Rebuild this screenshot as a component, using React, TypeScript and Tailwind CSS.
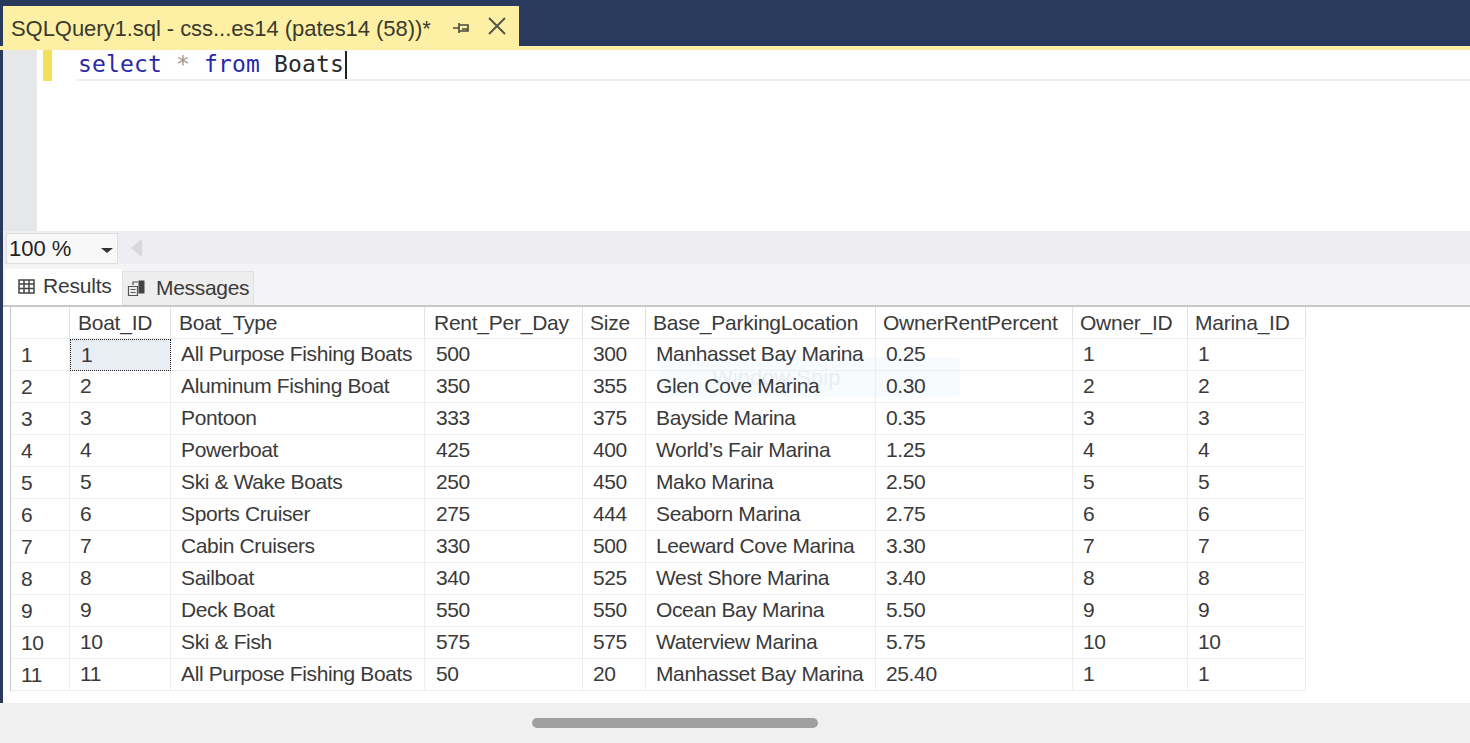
const columns = [
  "Boat_ID",
  "Boat_Type",
  "Rent_Per_Day",
  "Size",
  "Base_ParkingLocation",
  "OwnerRentPercent",
  "Owner_ID",
  "Marina_ID",
];

const rows = [
  ["1", "All Purpose Fishing Boats", "500", "300", "Manhasset Bay Marina", "0.25", "1", "1"],
  ["2", "Aluminum Fishing Boat", "350", "355", "Glen Cove Marina", "0.30", "2", "2"],
  ["3", "Pontoon", "333", "375", "Bayside Marina", "0.35", "3", "3"],
  ["4", "Powerboat", "425", "400", "World’s Fair Marina", "1.25", "4", "4"],
  ["5", "Ski & Wake Boats", "250", "450", "Mako Marina", "2.50", "5", "5"],
  ["6", "Sports Cruiser", "275", "444", "Seaborn Marina", "2.75", "6", "6"],
  ["7", "Cabin Cruisers", "330", "500", "Leeward Cove Marina", "3.30", "7", "7"],
  ["8", "Sailboat", "340", "525", "West Shore Marina", "3.40", "8", "8"],
  ["9", "Deck Boat", "550", "550", "Ocean Bay Marina", "5.50", "9", "9"],
  ["10", "Ski & Fish", "575", "575", "Waterview Marina", "5.75", "10", "10"],
  ["11", "All Purpose Fishing Boats", "50", "20", "Manhasset Bay Marina", "25.40", "1", "1"],
];

const rowClass =
  "grid grid-cols-[59px_101px_254px_158px_63px_230px_197px_115px_118px] h-8 border-b border-[#eeeeee]";

function PinIcon() {
  return (
    <svg width="18" height="16" viewBox="0 0 18 16" className="text-[#4a4a3a]">
      <path d="M1 8h6M7 3v10M7 5h9v6H7M10 9h6" fill="none" stroke="currentColor" strokeWidth="1.600" />
    </svg>
  );
}

function GridIcon() {
  return (
    <svg width="17" height="15" viewBox="0 0 17 15" className="text-[#444444]">
      <path d="M1 1h15v13H1zM1 5h15M1 9.500h15M6 1v13M11 1v13" fill="none" stroke="currentColor" strokeWidth="1.500" />
    </svg>
  );
}

function MessagesIcon() {
  return (
    <svg width="20" height="18" viewBox="0 0 20 18" className="text-[#555555]">
      <path d="M1.500 7.500h9v9h-9zM3.500 10.500h5M3.500 13.500h5" fill="none" stroke="currentColor" strokeWidth="1.200" />
      <path d="M11.500 1.500h6v13h-6z" fill="#444444" />
      <path d="M6 6V3h5" fill="none" stroke="currentColor" strokeWidth="1.200" />
    </svg>
  );
}

function ResultsGrid() {
  return (
    <div className="relative z-10 ml-[7px] w-[1296px] border-l border-[#c8c8c8] text-[21px] text-[#3a3a3a]">
      <div className={`${rowClass} leading-8 tracking-[-0.25px]`}>
        <div className="border-r border-[#e4e4e4]" />
        {columns.map((name, j) => (
          <div
            key={name}
            className={
              j < 2
                ? "border-r border-[#e4e4e4] pl-2 whitespace-nowrap"
                : j === 2
                  ? "border-r border-[#e4e4e4] pl-[9px] whitespace-nowrap"
                  : "border-r border-[#e4e4e4] pl-[7px] whitespace-nowrap"
            }
          >
            {name}
          </div>
        ))}
      </div>
      {rows.map((row, i) => (
        <div key={row[0]} className={`${rowClass} leading-[30px] tracking-[-0.37px]`}>
          <div className="border-r border-[#eeeeee] pl-[10px] pt-px">{i + 1}</div>
          {row.map((value, j) => {
            if (i === 0 && j === 0) {
              return (
                <div key={j} className="-mb-px border border-dotted border-[#222222] bg-[#e8eef4] pl-[10px]">
                  {value}
                </div>
              );
            }
            return (
              <div
                key={j}
                className={
                  j === 2
                    ? "border-r border-[#eeeeee] pl-[11px] whitespace-nowrap"
                    : "border-r border-[#eeeeee] pl-[10px] whitespace-nowrap"
                }
              >
                {value}
              </div>
            );
          })}
        </div>
      ))}
    </div>
  );
}

export default function App() {
  return (
    <div className="flex h-[743px] w-[1470px] flex-col overflow-hidden bg-white font-['Liberation_Sans',sans-serif]">
      <div className="flex h-[46px] shrink-0 items-end bg-[#2a3a5c] pl-[3px]">
        <div className="flex h-10 w-[516px] items-center bg-[#fdf0a4] pl-2 pt-1 text-[22px] tracking-[-0.05px] text-[#3a3a30]">
          <span className="whitespace-nowrap">SQLQuery1.sql - css...es14 (pates14 (58))*</span>
          <span className="ml-[21px]">
            <PinIcon />
          </span>
          <svg width="20" height="20" viewBox="0 0 20 20" className="-mt-1 ml-[17px] text-[#55554a]">
            <path d="M2 2l16 16M18 2L2 18" fill="none" stroke="currentColor" strokeWidth="2" />
          </svg>
        </div>
      </div>
      <div className="h-1 shrink-0 bg-[#fdf0a4]" />

      <div className="flex flex-1 border-l-[3px] border-[#2a3a5c]">
        <div className="flex min-w-0 flex-1 flex-col">
          <div className="flex h-[181px] shrink-0">
            <div className="w-[34px] shrink-0 bg-[#e6e7e9]" />
            <div className="ml-[6px] h-[31px] w-[9px] shrink-0 bg-[#f5e05a]" />
            <div className="ml-6 flex h-[31px] flex-1 items-center border-b-2 border-[#eceef2] pl-[2px] font-['DejaVu_Sans_Mono',monospace] text-[23px] tracking-[0.15px]">
              <span className="text-[#2a2aa8]">select</span>
              <span className="text-[#9a9a9a]">&nbsp;*&nbsp;</span>
              <span className="text-[#2a2aa8]">from</span>
              <span className="text-[#2a2a2a]">&nbsp;Boats</span>
              <span className="ml-px h-7 w-0.5 bg-[#222222]" />
            </div>
          </div>

          <div className="flex h-[33px] shrink-0 items-end bg-[#eeeef2] pl-[3px]">
            <div className="flex h-[31px] w-[112px] items-center justify-between border border-[#dddddd] bg-[#f8f8f8] pl-[2px] pr-[3px] text-[22px] text-[#222222]">
              <span>100 %</span>
              <span className="mr-px mt-1 h-0 w-0 border-x-[6px] border-t-[5px] border-x-transparent border-t-[#333333]" />
            </div>
            <span className="mb-[7px] ml-[13px] h-0 w-0 border-y-[9px] border-r-[11px] border-y-transparent border-r-[#d8d8dc]" />
          </div>

          <div className="flex h-[43px] shrink-0 items-end border-b-2 border-[#c8c8c8] bg-[#f4f4f6] pl-[2px]">
            <div className="flex h-[36px] w-[117px] items-center gap-2 bg-[#ffffff] pb-[2px] pl-[13px] text-[21px] tracking-[-0.2px] text-[#3a3a3a]">
              <GridIcon />
              Results
            </div>
            <div className="flex h-[34px] w-[132px] items-center gap-[9px] border border-b-0 border-[#e2e2e2] bg-[#eeeeee] pb-[2px] pl-1 text-[21px] tracking-[-0.3px] text-[#3a3a3a]">
              <MessagesIcon />
              Messages
            </div>
          </div>

          <div className="relative flex-1 bg-white">
            <ResultsGrid />
            <div className="absolute left-[657px] top-[50px] flex h-10 w-[300px] items-center rounded-sm bg-[#f7fbfe] pl-[52px] text-[22px] text-[#e9eef3]">
              Window Snip
            </div>
          </div>
        </div>
      </div>

      <div className="flex h-10 shrink-0 items-center justify-start bg-[#f0f0f0] pl-[532px]">
        <div className="h-2.5 w-[286px] rounded-full bg-[#a0a0a0]" />
      </div>
    </div>
  );
}
